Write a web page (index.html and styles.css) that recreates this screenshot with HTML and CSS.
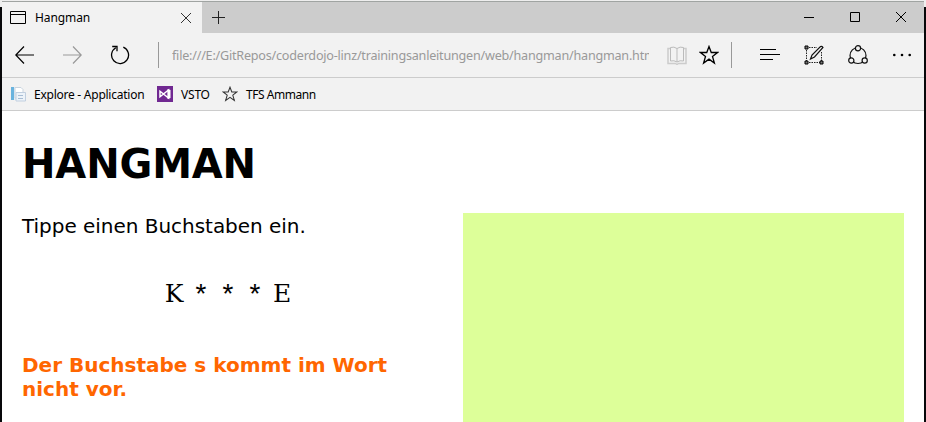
FILE: index.html
```html
<!DOCTYPE html>
<html lang="de">
<head>
<meta charset="utf-8">
<title>Hangman</title>
<link rel="stylesheet" href="styles.css">
</head>
<body>
<div class="window">
  <header class="titlebar">
    <div class="tab">
      <svg class="tab-icon" width="16" height="13" viewBox="0 0 16 13"><path d="M.5.5h15v12H.5zM.5 3.5h15" fill="none" stroke="#000"/></svg>
      <span class="tab-title">Hangman</span>
      <svg width="10" height="10" viewBox="0 0 10 10"><path d="M0 0l10 10M10 0L0 10" stroke="#333" fill="none"/></svg>
    </div>
    <svg class="new-tab" width="13" height="13" viewBox="0 0 13 13"><path d="M6.5 0v13M0 6.5h13" stroke="#222"/></svg>
    <div class="controls">
      <svg width="10" height="10" viewBox="0 0 10 10"><path d="M0 5.5h10" stroke="#000"/></svg>
      <svg width="10" height="10" viewBox="0 0 10 10"><path d="M.5.5h9v9h-9z" stroke="#000" fill="none"/></svg>
      <svg width="10" height="10" viewBox="0 0 10 10"><path d="M0 0l10 10M10 0L0 10" stroke="#000" fill="none"/></svg>
    </div>
  </header>
  <nav class="navbar">
    <svg class="arrow" width="19" height="18" viewBox="0 0 19 18"><path d="M9 .5L.8 9 9 17.500M.8 9H19" stroke="#000" stroke-width="1.200" fill="none"/></svg>
    <svg class="arrow forward" width="19" height="18" viewBox="0 0 19 18"><path d="M10 .5L18.200 9 10 17.500M18.200 9H0" stroke="#999" stroke-width="1.200" fill="none"/></svg>
    <svg class="reload" width="20" height="20" viewBox="0 0 20 20"><path d="M13.300 2.200A8.500 8.500 0 1 1 5.800 2.700M2.200 1.500H7V6.300" stroke="#000" stroke-width="1.300" fill="none"/></svg>
    <div class="address">
      <span class="url">file:///E:/GitRepos/coderdojo-linz/trainingsanleitungen/web/hangman/hangman.html</span>
      <svg class="book" width="20" height="19" viewBox="0 0 20 19"><path d="M3 2.500H1v15h7.500l1.500 1 1.500-1H19v-15h-2" stroke="#ccc" stroke-width="1.500" fill="none"/><path d="M10 2.500Q7 .3 3.500 1.500v13.500Q7 14 10 16q3-2 6.500-1V1.500Q13 .3 10 2.500V16" stroke="#bbb" fill="none"/></svg>
      <svg class="star" width="20" height="20" viewBox="0 0 20 20"><path d="M10 1.500l2.250 6h6.250l-5 4 1.900 6.500-5.400-3.900L4.600 18l1.900-6.500-5-4h6.250z" stroke="#000" stroke-width="1.300" fill="none"/></svg>
    </div>
    <div class="tools">
      <svg width="20" height="12" viewBox="0 0 20 12"><path d="M0 .5h16M0 5.500h20M0 10.500h13" stroke="#000"/></svg>
      <svg width="20" height="20" viewBox="0 0 20 20"><path d="M5 2.500h8M2.500 5v11M5 17.500h11M17.500 16V7" stroke="#222" stroke-dasharray="1.500 1" fill="none"/><path d="M1 1h3v3H1zM1 16h3v3H1zM16 16h3v3h-3z" fill="#777" stroke="#000"/><path d="M6.500 14l1.500-4L16.500 1.500q1.500-.6 2.500 1L10.500 12z" fill="#f2f2f2" stroke="#111" stroke-width="1.200"/></svg>
      <svg width="20" height="20" viewBox="0 0 20 20"><circle cx="10" cy="10.500" r="8" fill="none" stroke="#111" stroke-width="1.200"/><g fill="#f2f2f2" stroke="#111" stroke-width="1.200"><circle cx="10" cy="3.300" r="2.600"/><circle cx="3.300" cy="15.500" r="2.600"/><circle cx="16.700" cy="15.500" r="2.600"/></g></svg>
      <svg class="more" width="18" height="4" viewBox="0 0 18 4"><circle cx="1.300" cy="2" r="1.300"/><circle cx="9" cy="2" r="1.300"/><circle cx="16.700" cy="2" r="1.300"/></svg>
    </div>
  </nav>
  <div class="favorites">
    <svg width="16" height="16" viewBox="0 0 16 16"><path d="M1 1h10v13H1z" fill="#e5ecf3"/><path d="M1 1h3v13H1z" fill="#69b3de"/><path d="M5 1.500h6l2 2V12H5z" fill="#fff" stroke="#c9d4df"/><path d="M6 6.500h9.500v8.500H6z" fill="#edf3f9" stroke="#c1cfdf"/><path d="M8 9.500h5M8 12.500h5" stroke="#a8bdd4"/></svg>
    <span class="fav-explore">Explore - Application</span>
    <svg width="16" height="16" viewBox="0 0 16 16"><path d="M0 0h16v16H0z" fill="#702891"/><path d="M3 5.200v5.600L11.500 4v8z" fill="none" stroke="#fff" stroke-width="1.500"/><path d="M10.500 3l3 1v8l-3 1z" fill="#fff"/></svg>
    <span class="fav-vsto">VSTO</span>
    <svg width="16" height="16" viewBox="0 0 20 20"><path d="M10 1.500l2.250 6h6.250l-5 4 1.900 6.500-5.400-3.900L4.600 18l1.900-6.500-5-4h6.250z" stroke="#333" stroke-width="1.300" fill="none"/></svg>
    <span class="fav-tfs">TFS Ammann</span>
  </div>
  <main class="page">
    <h1>HANGMAN</h1>
    <div class="columns">
      <section class="game">
        <p class="prompt">Tippe einen Buchstaben ein.</p>
        <p class="word"><span>K</span><span class="hidden">*</span><span class="hidden">*</span><span class="hidden">*</span><span>E</span></p>
        <p class="message">Der Buchstabe s kommt im Wort nicht vor.</p>
      </section>
      <div class="canvas"></div>
    </div>
  </main>
</div>
</body>
</html>
```

FILE: styles.css
```css
* { box-sizing: border-box; }
body {
  margin: 0;
  height: 422px;
  overflow: hidden;
  padding: 1px 2px 0;
  background: linear-gradient(#eee 0 7px, #08080a 7px);
  font-family: "Noto Sans", sans-serif;
  font-size: 12px;
  color: #000;
}
svg { display: block; flex: none; }
.window {
  height: 421px;
  overflow: hidden;
  border-top: 1px solid #a0a4a2;
  background: #fff;
}
.titlebar { display: flex; height: 31px; background: #ccc; }
.tab {
  display: flex;
  align-items: center;
  width: 200px;
  padding: 0 11px 0 8px;
  background: #f2f2f2;
}
.tab-icon { margin-right: 9px; }
.tab-title { flex: 1; letter-spacing: -.1px; }
.new-tab { margin: 9px 0 0 10px; }
.controls { display: flex; gap: 36px; margin: 10px 18px 0 auto; }
.navbar {
  display: flex;
  align-items: center;
  height: 45px;
  padding: 0 13px 0 13px;
  border-bottom: 1px solid #ccc;
  background: #f2f2f2;
}
.forward { margin-left: 29px; }
.reload { margin: 0 28px 0 28px; }
.address {
  display: flex;
  align-items: center;
  width: 574px;
  height: 26px;
  border: solid #999;
  border-width: 0 1px;
  padding: 0 12px 0 13px;
}
.url {
  width: 477px;
  overflow: hidden;
  white-space: nowrap;
  color: #999;
  font-size: 12.6px;
  letter-spacing: -.22px;
}
.book { margin: 0 12px 0 18px; }
.tools { display: flex; align-items: center; margin-left: auto; gap: 24px; }
.more { margin-left: 1px; }
.favorites {
  display: flex;
  align-items: center;
  height: 33px;
  padding-left: 8px;
  border-bottom: 1px solid #ccc;
  background: #f2f2f2;
  white-space: nowrap;
}
.favorites span { margin-left: 8px; }
.fav-explore { width: 123px; letter-spacing: -.25px; }
.fav-vsto { width: 41px; letter-spacing: -.2px; }
.fav-tfs { letter-spacing: -.45px; }
.page { padding: 29px 20px 0; font-family: "DejaVu Sans", Verdana, sans-serif; }
h1 { margin: 0; font-size: 40px; line-height: 48px; letter-spacing: -.15px; }
.columns { display: flex; justify-content: space-between; margin-top: 25px; }
.game { width: 412px; font-size: 20px; line-height: 24px; }
p { margin: 0; }
.prompt { padding-top: 1px; letter-spacing: -.03px; }
.word {
  display: grid;
  grid-template: 34px / repeat(5, 27px);
  justify-content: center;
  margin-top: 39px;
  font-family: "DejaVu Serif", serif;
  font-weight: 200;
  font-size: 25px;
  line-height: 34px;
  text-align: center;
}
.hidden { font-family: "Liberation Mono", monospace; font-size: 28px; line-height: 40px; }
.message { margin-top: 42px; color: #f60; font-weight: bold; }
.canvas { width: 441px; height: 441px; background: #df9; }
```
